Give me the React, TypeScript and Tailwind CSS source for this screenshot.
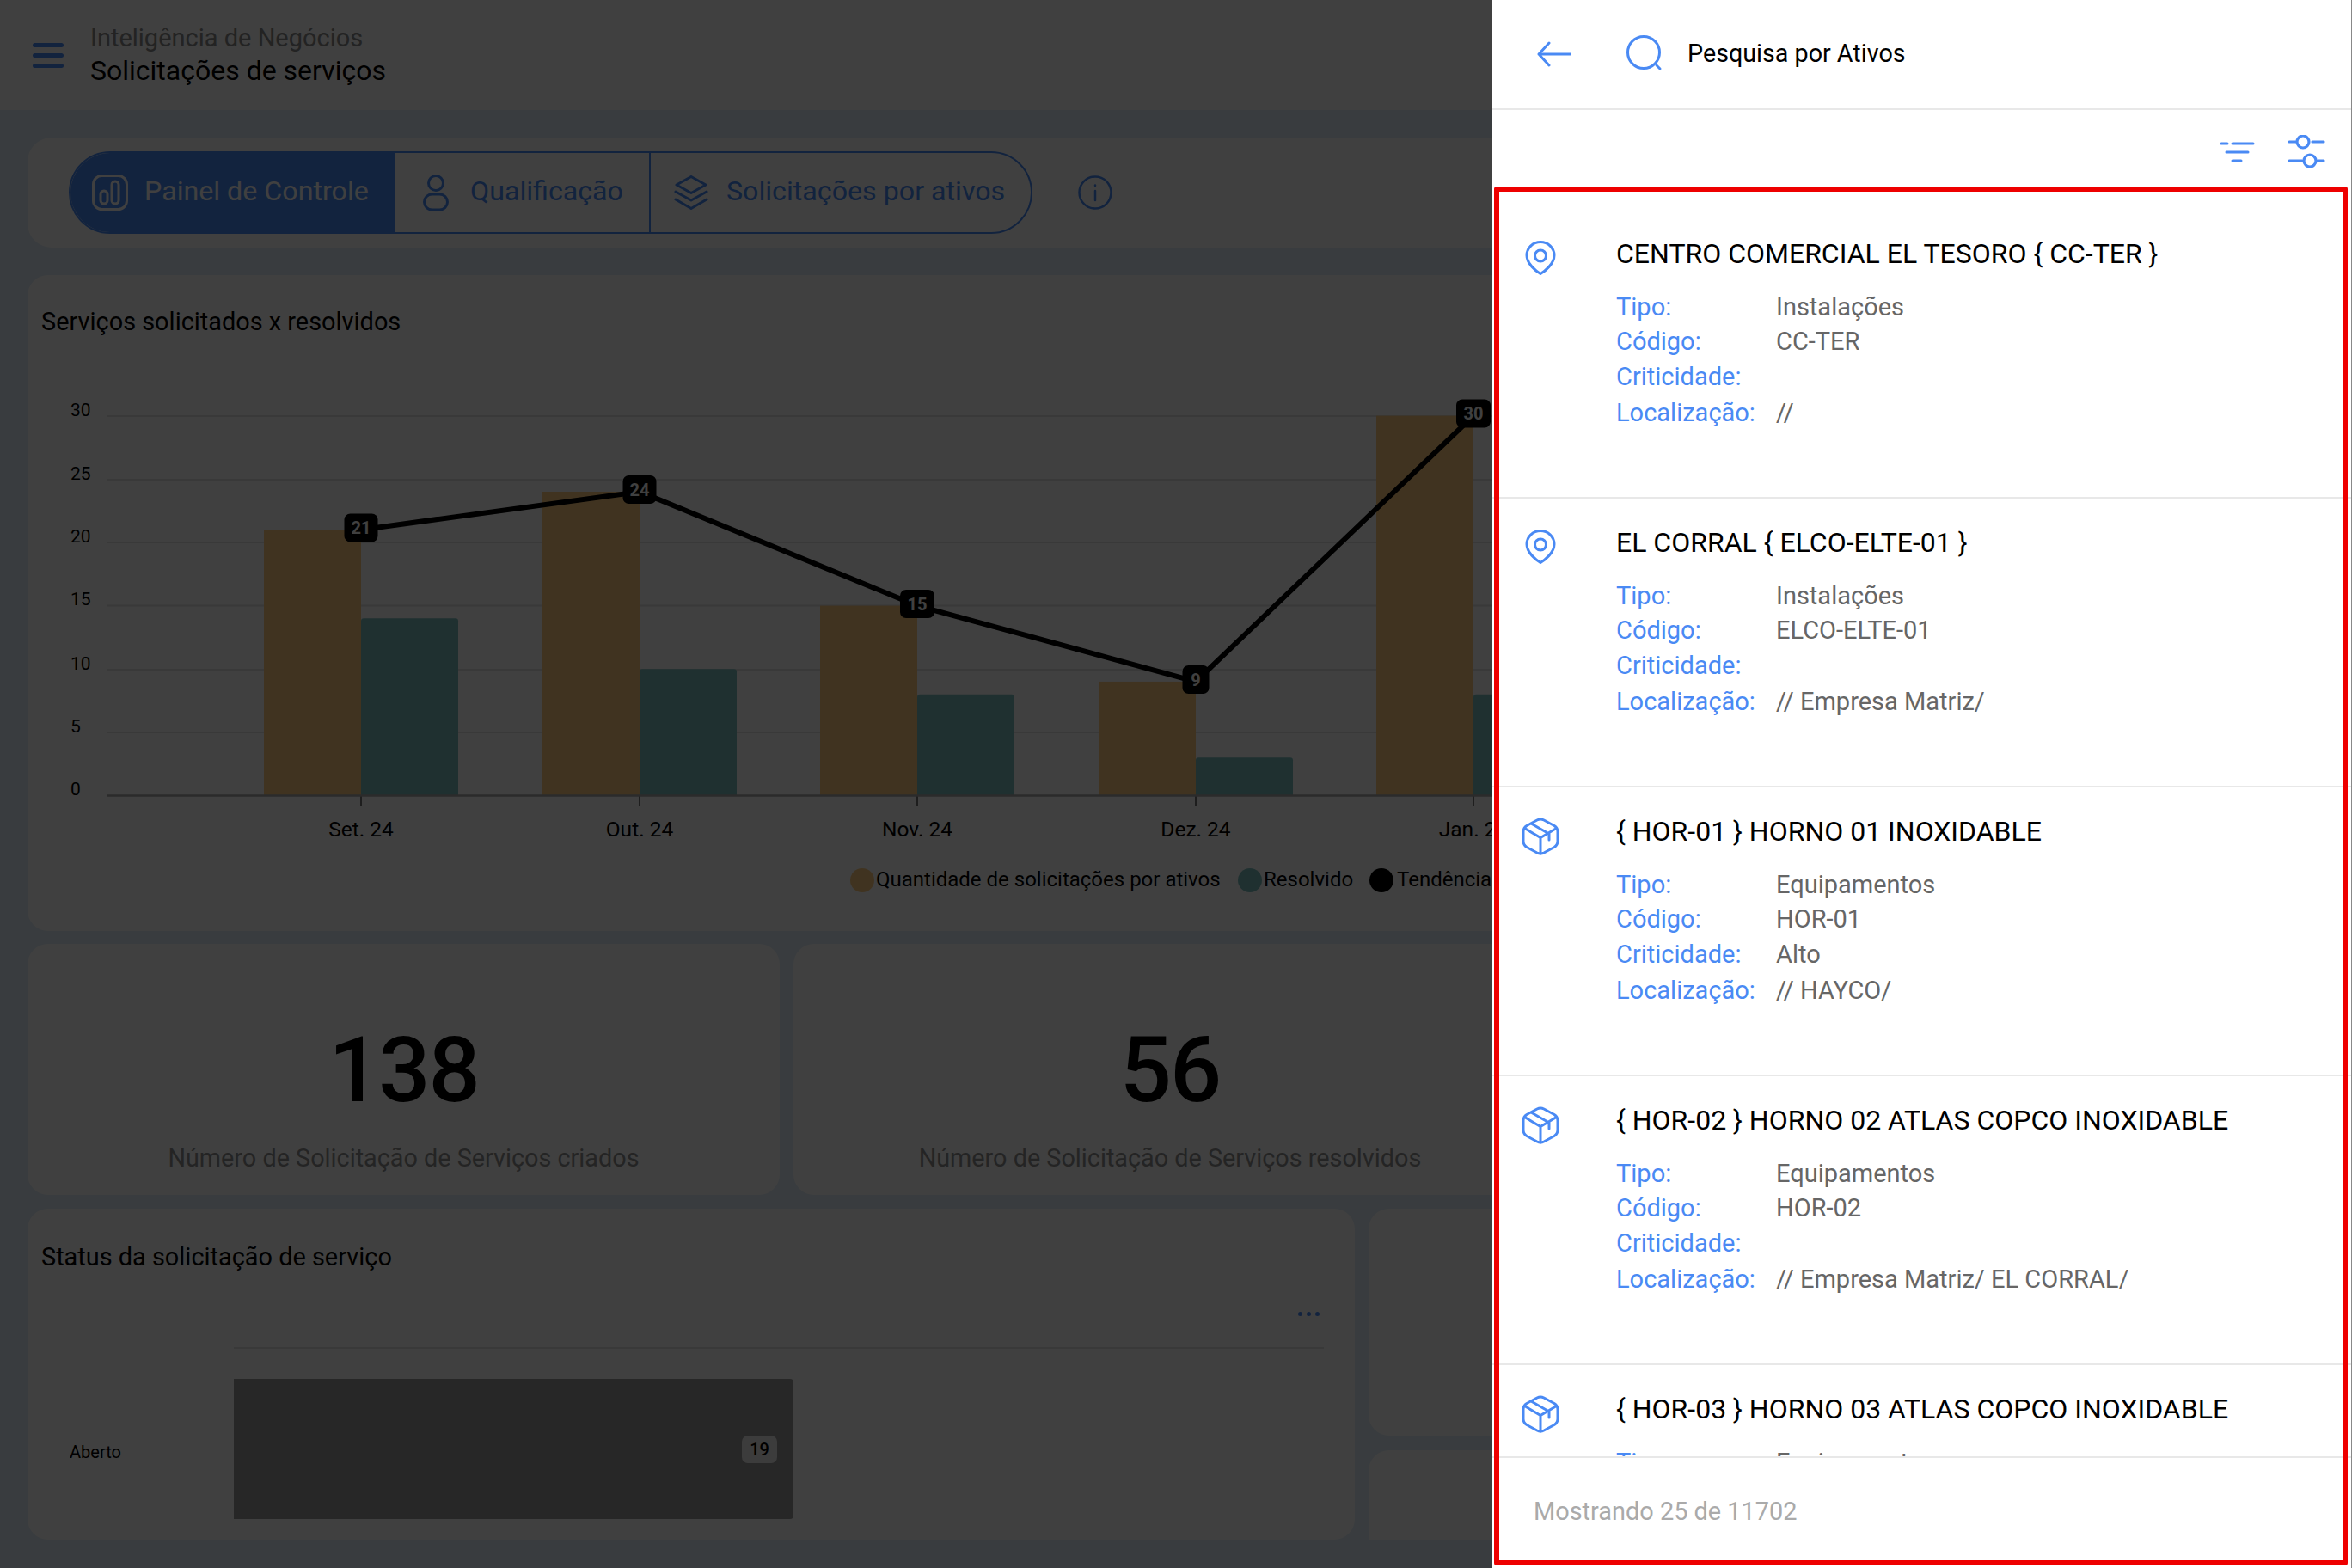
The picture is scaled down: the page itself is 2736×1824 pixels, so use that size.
const gridYs = [484, 558, 631, 704.5, 779, 852];
const axis = ["30", "25", "20", "15", "10", "5", "0"];
const unit = 14.73;
const baseY = 925.5;
const groups = [
  { c: 420, m: "Set. 24", a: 21, b: 14, ly: 614 },
  { c: 744, m: "Out. 24", a: 24, b: 10, ly: 569.5 },
  { c: 1067, m: "Nov. 24", a: 15, b: 8, ly: 702.5 },
  { c: 1391, m: "Dez. 24", a: 9, b: 3, ly: 790.5 },
  { c: 1714, m: "Jan. 25", a: 30, b: 8, ly: 481 },
];

const items = [
  { icon: "pin", title: "CENTRO COMERCIAL EL TESORO { CC-TER }", tipo: "Instalações", cod: "CC-TER", crit: "", loc: "//" },
  { icon: "pin", title: "EL CORRAL { ELCO-ELTE-01 }", tipo: "Instalações", cod: "ELCO-ELTE-01", crit: "", loc: "// Empresa Matriz/" },
  { icon: "box", title: "{ HOR-01 } HORNO 01 INOXIDABLE", tipo: "Equipamentos", cod: "HOR-01", crit: "Alto", loc: "// HAYCO/" },
  { icon: "box", title: "{ HOR-02 } HORNO 02 ATLAS COPCO INOXIDABLE", tipo: "Equipamentos", cod: "HOR-02", crit: "", loc: "// Empresa Matriz/ EL CORRAL/" },
  { icon: "box", title: "{ HOR-03 } HORNO 03 ATLAS COPCO INOXIDABLE", tipo: "Equipamentos", cod: "HOR-03", crit: "", loc: "// Empresa Matriz/ EL CORRAL/" },
];

function PinIcon() {
  return (
    <svg width="36" height="40" viewBox="0 0 36 40" fill="none" stroke="#4a8af4" strokeWidth="3" className="block">
      <path d="M18 1.5C9 1.5 2 8.5 2 17C2 27 13 35.5 18 38.5C23 35.5 34 27 34 17C34 8.5 27 1.5 18 1.5Z" />
      <circle cx="18" cy="17.5" r="6.5" />
    </svg>
  );
}

function BoxIcon() {
  return (
    <svg width="44" height="44" viewBox="0 0 44 44" fill="none" stroke="#4a8af4" strokeWidth="3" strokeLinecap="round" strokeLinejoin="round" className="block">
      <path d="M18 3Q22 1 26 3L38 9.5Q42 12 42 16.5V27.5Q42 32 38 34.5L26 41Q22 43 18 41L6 34.5Q2 32 2 27.5V16.5Q2 12 6 9.5Z" />
      <path d="M3.5 12.5L22 23.5L40.5 12.5M22 23.5V42M12 7.5L32 19V26" />
    </svg>
  );
}

function Row({ label, value, extra }: { label: string; value: string; extra?: string }) {
  return (
    <div className={"flex h-[40.5px] items-center leading-[40px] " + (extra ?? "")}>
      <span className="w-[186px] text-[#4a8af4]">{label}</span>
      <span className="text-[#666666]">{value}</span>
    </div>
  );
}

function Item({ it }: { it: (typeof items)[number] }) {
  return (
    <div className="flex h-[336px] shrink-0 border-b-2 border-[#e8e8e8] pl-[34px]">
      <div className="w-[110px] shrink-0">
        <div className={"flex w-[44px] justify-center " + (it.icon === "pin" ? "pt-[36px]" : "pt-[35px]")}>
          {it.icon === "pin" ? <PinIcon /> : <BoxIcon />}
        </div>
      </div>
      <div className="pt-[32px]">
        <div className="h-[38px] text-[32px] leading-[38px] text-black">{it.title}</div>
        <div className="mt-[23px] text-[29px] text-[#666666]">
          <Row label="Tipo:" value={it.tipo} />
          <Row label="Código:" value={it.cod} extra="-mt-[1px]" />
          <Row label="Criticidade:" value={it.crit} extra="mt-[1px]" />
          <Row label="Localização:" value={it.loc} extra="mt-[1px]" />
        </div>
      </div>
    </div>
  );
}

function Chart() {
  return (
    <svg width="1768" height="683" viewBox="32 400 1768 683" className="block" style={{ fontFamily: "Roboto, sans-serif" }}>
      {gridYs.map((y) => (
        <line key={y} x1="125" x2="1800" y1={y} y2={y} stroke="#e2e2e2" strokeWidth="2" />
      ))}
      {axis.map((t, i) => (
        <text key={t} x="82" y={[484, 558, 631, 704.5, 779, 852, 925.5][i] - 0.5} fontSize="21" fill="#000">
          {t}
        </text>
      ))}
      {groups.map((g) => (
        <g key={g.c}>
          <rect x={g.c - 113} y={baseY - g.a * unit} width="113" height={g.a * unit} fill="#ffcc80" />
          <path
            d={`M${g.c} ${baseY}V${baseY - g.b * unit + 3}Q${g.c} ${baseY - g.b * unit} ${g.c + 3} ${baseY - g.b * unit}H${g.c + 110}Q${g.c + 113} ${baseY - g.b * unit} ${g.c + 113} ${baseY - g.b * unit + 3}V${baseY}Z`}
            fill="#7cc0c0"
          />
          <line x1={g.c} x2={g.c} y1={baseY} y2="938" stroke="#777" strokeWidth="2" />
          <text x={g.c} y="973" textAnchor="middle" fontSize="24.5" fill="#000">
            {g.m}
          </text>
        </g>
      ))}
      <line x1="125" x2="1800" y1={baseY} y2={baseY} stroke="#aaa" strokeWidth="2.5" />
      <polyline
        points={groups.map((g) => `${g.c},${baseY - g.a * unit}`).join(" ")}
        fill="none"
        stroke="#000"
        strokeWidth="6"
      />
      {groups.map((g) => {
        const w = g.a === 9 ? 31 : g.a === 15 || g.a === 30 ? 40 : 39;
        return (
          <g key={g.a}>
            <rect x={g.c - w / 2} y={g.ly - 16.5} width={w} height="33" rx="7" fill="#000" />
            <text x={g.c} y={g.ly + 7} textAnchor="middle" fontSize="20" fontWeight="700" fill="#fff">
              {g.a}
            </text>
          </g>
        );
      })}
      <circle cx="1003" cy="1024" r="14" fill="#ffcc80" />
      <text x="1019" y="1030.5" fontSize="24" fill="#000">Quantidade de solicitações por ativos</text>
      <circle cx="1454" cy="1024" r="14" fill="#7cc0c0" />
      <text x="1470" y="1030.5" fontSize="24" fill="#000">Resolvido</text>
      <circle cx="1607" cy="1024" r="14" fill="#000" />
      <text x="1625" y="1030.5" fontSize="24" fill="#000">Tendência</text>
    </svg>
  );
}

export default function App() {
  return (
    <div className="relative h-[1824px] w-[2736px] overflow-hidden bg-[#e2eff9] font-['Roboto',sans-serif]">
      <header className="flex h-[128px] items-center bg-white pl-[38px]">
        <div className="flex w-[67px] flex-col gap-[7px]">
          <div className="h-[5px] w-[36px] rounded-full bg-[#4a8cf8]" />
          <div className="h-[5px] w-[36px] rounded-full bg-[#4a8cf8]" />
          <div className="h-[5px] w-[36px] rounded-full bg-[#4a8cf8]" />
        </div>
        <div>
          <div className="text-[29px] leading-[35px] text-[#8a8a8a]">Inteligência de Negócios</div>
          <div className="text-[32px] leading-[40px] text-black">Solicitações de serviços</div>
        </div>
      </header>

      <main className="px-[32px]">
        <section className="mt-[32px] flex h-[128px] items-center rounded-[28px] bg-white pl-[48px]">
          <div className="flex h-[96px] w-[1121px] overflow-hidden rounded-full border-2 border-[#4a8cf8] text-[32.2px] text-[#4a8cf8]">
            <div className="-my-[2px] -ml-[2px] flex w-[379px] items-center gap-[19px] bg-[#4a8cf8] pl-[27px] text-white">
              <svg width="42" height="42" viewBox="0 0 42 42" fill="none" stroke="#fff" strokeWidth="3">
                <rect x="1.5" y="1.5" width="39" height="39" rx="10" />
                <rect x="10" y="19" width="8" height="15" rx="4" />
                <rect x="23" y="8" width="8" height="26" rx="4" />
              </svg>
              <span className="mb-[3px]">Painel de Controle</span>
            </div>
            <div className="flex w-[298px] items-center gap-[25px] border-r-2 border-[#4a8cf8] pl-[33px]">
              <svg width="30" height="42" viewBox="0 0 30 42" fill="none" stroke="#4a8cf8" strokeWidth="3">
                <circle cx="15" cy="10" r="8.5" />
                <rect x="1.5" y="23" width="27" height="18" rx="9" />
              </svg>
              <span className="mb-[3px]">Qualificação</span>
            </div>
            <div className="flex items-center gap-[21px] pl-[27px]">
              <svg width="40" height="40" viewBox="0 0 40 40" fill="none" stroke="#4a8cf8" strokeWidth="3" strokeLinejoin="round" strokeLinecap="round">
                <path d="M20 1.5L37 11L20 20.5L3 11Z" />
                <path d="M2 19L20 29L38 19" />
                <path d="M2 28L20 38.5L38 28" />
              </svg>
              <span className="mb-[3px]">Solicitações por ativos</span>
            </div>
          </div>
          <div className="ml-[53px]">
            <svg width="40" height="40" viewBox="0 0 40 40" fill="none" stroke="#4a8cf8" strokeWidth="2.5" strokeLinecap="round" className="block">
              <circle cx="20" cy="20" r="18.5" />
              <path d="M20 18V29M20 11.5V12" />
            </svg>
          </div>
        </section>

        <section className="mt-[32px] h-[763px] w-[1900px] rounded-[24px] bg-white">
          <h2 className="pl-[16px] pt-[36px] text-[28.9px] font-normal leading-[36px] text-black">Serviços solicitados x resolvidos</h2>
          <div className="pt-[8px]">
            <Chart />
          </div>
        </section>

        <section className="mt-[15px] flex h-[292px] gap-[16px]">
          <div className="flex w-[875px] shrink-0 flex-col items-center rounded-[24px] bg-white">
            <div className="mt-[87px] text-[106px] font-medium leading-[120px] tracking-[-2px] text-black">138</div>
            <div className="mt-[22px] text-[28.8px] leading-[40px] text-[#909090]">Número de Solicitação de Serviços criados</div>
          </div>
          <div className="flex w-[876px] shrink-0 flex-col items-center rounded-[24px] bg-white">
            <div className="mt-[87px] text-[106px] font-medium leading-[120px] tracking-[-2px] text-black">56</div>
            <div className="mt-[22px] text-[28.8px] leading-[40px] text-[#909090]">Número de Solicitação de Serviços resolvidos</div>
          </div>
        </section>

        <section className="mt-[16px] flex h-[385px] gap-[16px]">
          <div className="w-[1544px] shrink-0 rounded-[24px] bg-white pl-[16px]">
            <h2 className="pt-[38px] text-[28.9px] font-normal leading-[36px] text-black">Status da solicitação de serviço</h2>
            <div className="flex h-[49px] w-[1491px] items-end justify-end">
              <div className="mb-[-2px] mr-[4px] flex gap-[5px]">
                <span className="size-[5px] rounded-full bg-[#4a8cf8]" />
                <span className="size-[5px] rounded-full bg-[#4a8cf8]" />
                <span className="size-[5px] rounded-full bg-[#4a8cf8]" />
              </div>
            </div>
            <div className="ml-[224px] mt-[38px] h-[2px] w-[1268px] bg-[#e2e2e2]" />
            <div className="mt-[35px] flex h-[163px] items-center">
              <span className="w-[224px] pl-[33px] pt-[6px] text-[20px] text-black">Aberto</span>
              <div className="flex h-[163px] w-[651px] items-center justify-end rounded-r-[4px] bg-[#9c9c9c] pr-[19px]">
                <span className="flex h-[32px] w-[41px] items-center justify-center rounded-[7px] bg-[#f0f0f0] text-[20px] font-medium text-black">19</span>
              </div>
            </div>
          </div>
          <div className="flex w-[400px] shrink-0 flex-col gap-[17px]">
            <div className="h-[264px] rounded-[24px] bg-white" />
            <div className="h-[104px] rounded-t-[24px] bg-white" />
          </div>
        </section>
      </main>

      <div className="absolute inset-0 bg-black/75" />

      <aside className="absolute inset-y-0 right-0 flex w-[1000px] flex-col border-r border-[#888888] bg-white">
        <div className="flex h-[128px] shrink-0 items-center border-b-2 border-[#e8e8e8] pl-[52px]">
          <svg width="40" height="30" viewBox="0 0 40 30" fill="none" stroke="#4a8af4" strokeWidth="3" strokeLinecap="round" strokeLinejoin="round" className="block">
            <path d="M2 15H39M14 2L2 15L14 28" />
          </svg>
          <svg width="44" height="44" viewBox="0 0 44 44" fill="none" stroke="#4a8af4" strokeWidth="3" strokeLinecap="round" className="ml-[64px] block">
            <circle cx="20" cy="20" r="18.5" />
            <path d="M35 35L39 39" />
          </svg>
          <span className="ml-[27px] text-[28.7px] text-black">Pesquisa por Ativos</span>
        </div>
        <div className="flex h-[116px] shrink-0 justify-end pr-[30px] pt-[29px]">
          <svg width="44" height="34" viewBox="0 0 44 34" fill="none" stroke="#4a8af4" strokeWidth="3" strokeLinecap="round" className="mr-[35px] mt-[7px] block">
            <path d="M2 3H9M15 3H39M8 13H33M15 23H25" />
          </svg>
          <svg width="44" height="38" viewBox="0 0 44 38" fill="none" stroke="#4a8af4" strokeWidth="3.2" strokeLinecap="round" className="block">
            <circle cx="18" cy="8" r="7" />
            <circle cx="26" cy="30" r="7" />
            <path d="M2 8H10M29 8H42M2 30H17M35 30H42" />
          </svg>
        </div>
        <div className="flex min-h-0 flex-1 flex-col overflow-hidden">
          {items.map((it) => (
            <Item key={it.title} it={it} />
          ))}
        </div>
        <div className="flex h-[130px] shrink-0 items-center border-t-2 border-[#e8e8e8] pb-[2px] pl-[48px] text-[28.9px] text-[#aaaaaa]">
          Mostrando 25 de 11702
        </div>
      </aside>

      <div className="pointer-events-none absolute left-[1738px] top-[217px] h-[1604px] w-[993px] rounded-[3px] border-[6px] border-[#ee0000]" />
    </div>
  );
}
